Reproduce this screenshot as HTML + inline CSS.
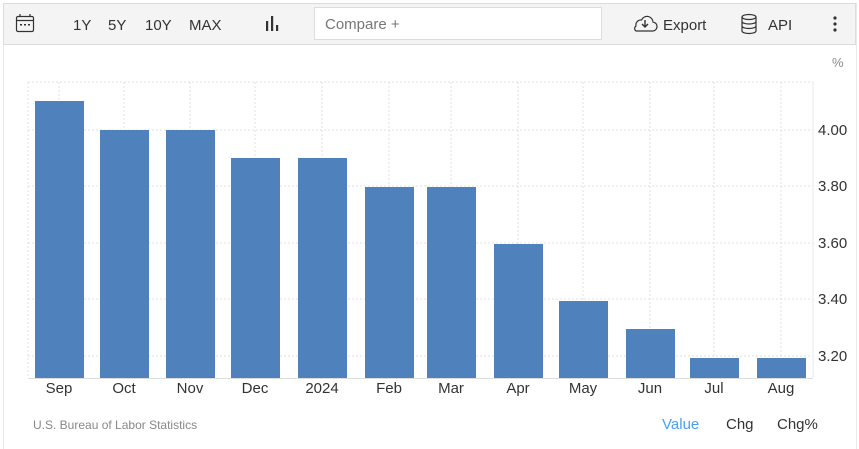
<!DOCTYPE html>
<html><head><style>
body{margin:0;width:859px;height:447px;background:#fff;font-family:"Liberation Sans",Arial,sans-serif;position:relative;overflow:hidden}
.frame{position:absolute;left:3px;top:3px;width:852px;height:446px;border-left:1px solid #e8e8e8;border-right:1px solid #e8e8e8}
.tb{position:absolute;left:3px;top:3px;width:851px;height:40px;background:#f4f4f4;border:1px solid #dcdcdc}
.t{position:absolute;top:17px;font-size:15px;color:#333}
.cmp{position:absolute;left:314px;top:7px;width:288px;height:33px;background:#fff;border:1px solid #ddd;box-sizing:border-box;font-size:15px;color:#777;padding:8px 10px}
svg{position:absolute;left:0;top:0}
</style></head><body>
<div class="frame"></div>
<div class="tb"></div>
<svg width="859" height="447">
<g fill="none" stroke="#333" stroke-width="1.2">
<rect x="16.5" y="16.5" width="17" height="15" rx="1.5"/><line x1="16.5" y1="20.5" x2="33.5" y2="20.5"/><line x1="20" y1="14" x2="20" y2="17"/><line x1="30" y1="14" x2="30" y2="17"/>
</g>
<g fill="#333"><rect x="20" y="24" width="2" height="1.5"/><rect x="24" y="24" width="2" height="1.5"/><rect x="28" y="24" width="2" height="1.5"/>
<rect x="266" y="21" width="2.2" height="10"/><rect x="271" y="16" width="2.2" height="15"/><rect x="276" y="25" width="2.2" height="6"/>
<circle cx="835" cy="18" r="1.6"/><circle cx="835" cy="24" r="1.6"/><circle cx="835" cy="30" r="1.6"/></g>
<path d="M636 31h16a4.5 4.5 0 0 0 1-9a6 6 0 0 0-11.5-2a5 5 0 0 0-5.5 6a3 3 0 0 0 0 5z" fill="none" stroke="#333" stroke-width="1.2"/>
<path d="M642 24l3 3 3-3M645 20v7" fill="none" stroke="#333" stroke-width="1.4"/>
<g fill="none" stroke="#333" stroke-width="1.2"><ellipse cx="749" cy="17" rx="7" ry="2.5"/><path d="M742 17v14c0 3.3 14 3.3 14 0V17M742 21.5c0 3.3 14 3.3 14 0M742 26c0 3.3 14 3.3 14 0"/></g>
<g stroke="#e0e0e0" stroke-dasharray="2,2" stroke-width="1">
<line x1="28" y1="82" x2="813" y2="82"/>
<line x1="28" y1="130" x2="813" y2="130"/><line x1="28" y1="186" x2="813" y2="186"/><line x1="28" y1="243" x2="813" y2="243"/><line x1="28" y1="299" x2="813" y2="299"/><line x1="28" y1="356" x2="813" y2="356"/>
<line x1="28" y1="82" x2="28" y2="378"/>
<line x1="59" y1="82" x2="59" y2="378"/><line x1="124" y1="82" x2="124" y2="378"/><line x1="190" y1="82" x2="190" y2="378"/><line x1="255" y1="82" x2="255" y2="378"/><line x1="322" y1="82" x2="322" y2="378"/><line x1="389" y1="82" x2="389" y2="378"/><line x1="451" y1="82" x2="451" y2="378"/><line x1="518" y1="82" x2="518" y2="378"/><line x1="583" y1="82" x2="583" y2="378"/><line x1="650" y1="82" x2="650" y2="378"/><line x1="714" y1="82" x2="714" y2="378"/><line x1="781" y1="82" x2="781" y2="378"/>
</g>
<line x1="813" y1="82" x2="813" y2="378" stroke="#e8e8e8"/>
<g fill="#4f81bd">
<rect x="35" y="101" width="49" height="277"/><rect x="100" y="130" width="49" height="248"/><rect x="166" y="130" width="49" height="248"/><rect x="231" y="158" width="49" height="220"/><rect x="298" y="158" width="49" height="220"/><rect x="365" y="187" width="49" height="191"/><rect x="427" y="187" width="49" height="191"/><rect x="494" y="244" width="49" height="134"/><rect x="559" y="301" width="49" height="77"/><rect x="626" y="329" width="49" height="49"/><rect x="690" y="358" width="49" height="20"/><rect x="757" y="358" width="49" height="20"/>
</g>
<line x1="28" y1="378.5" x2="813" y2="378.5" stroke="#ddd"/>
<g font-family="Liberation Sans,Arial,sans-serif" font-size="15" fill="#333" text-anchor="middle">
<text x="59" y="393">Sep</text><text x="124" y="393">Oct</text><text x="190" y="393">Nov</text><text x="255" y="393">Dec</text><text x="322" y="393">2024</text><text x="389" y="393">Feb</text><text x="451" y="393">Mar</text><text x="518" y="393">Apr</text><text x="583" y="393">May</text><text x="650" y="393">Jun</text><text x="714" y="393">Jul</text><text x="781" y="393">Aug</text>
</g>
<g font-family="Liberation Sans,Arial,sans-serif" font-size="15" fill="#333">
<text x="818" y="135">4.00</text><text x="818" y="191">3.80</text><text x="818" y="248">3.60</text><text x="818" y="304">3.40</text><text x="818" y="361">3.20</text>
<text x="832" y="67" font-size="13" fill="#888">%</text>
</g>
</svg>
<div class="t" style="left:73px">1Y</div><div class="t" style="left:108px">5Y</div><div class="t" style="left:145px">10Y</div><div class="t" style="left:189px">MAX</div>
<div class="cmp">Compare +</div>
<div class="t" style="left:663px">Export</div><div class="t" style="left:768px">API</div>
<div style="position:absolute;left:33px;top:418px;font-size:12px;color:#888">U.S. Bureau of Labor Statistics</div>
<div style="position:absolute;left:662px;top:416px;font-size:15px;color:#4a9ff5">Value</div>
<div style="position:absolute;left:726px;top:416px;font-size:15px;color:#333">Chg</div>
<div style="position:absolute;left:777px;top:416px;font-size:15px;color:#333">Chg%</div>
</body></html>
